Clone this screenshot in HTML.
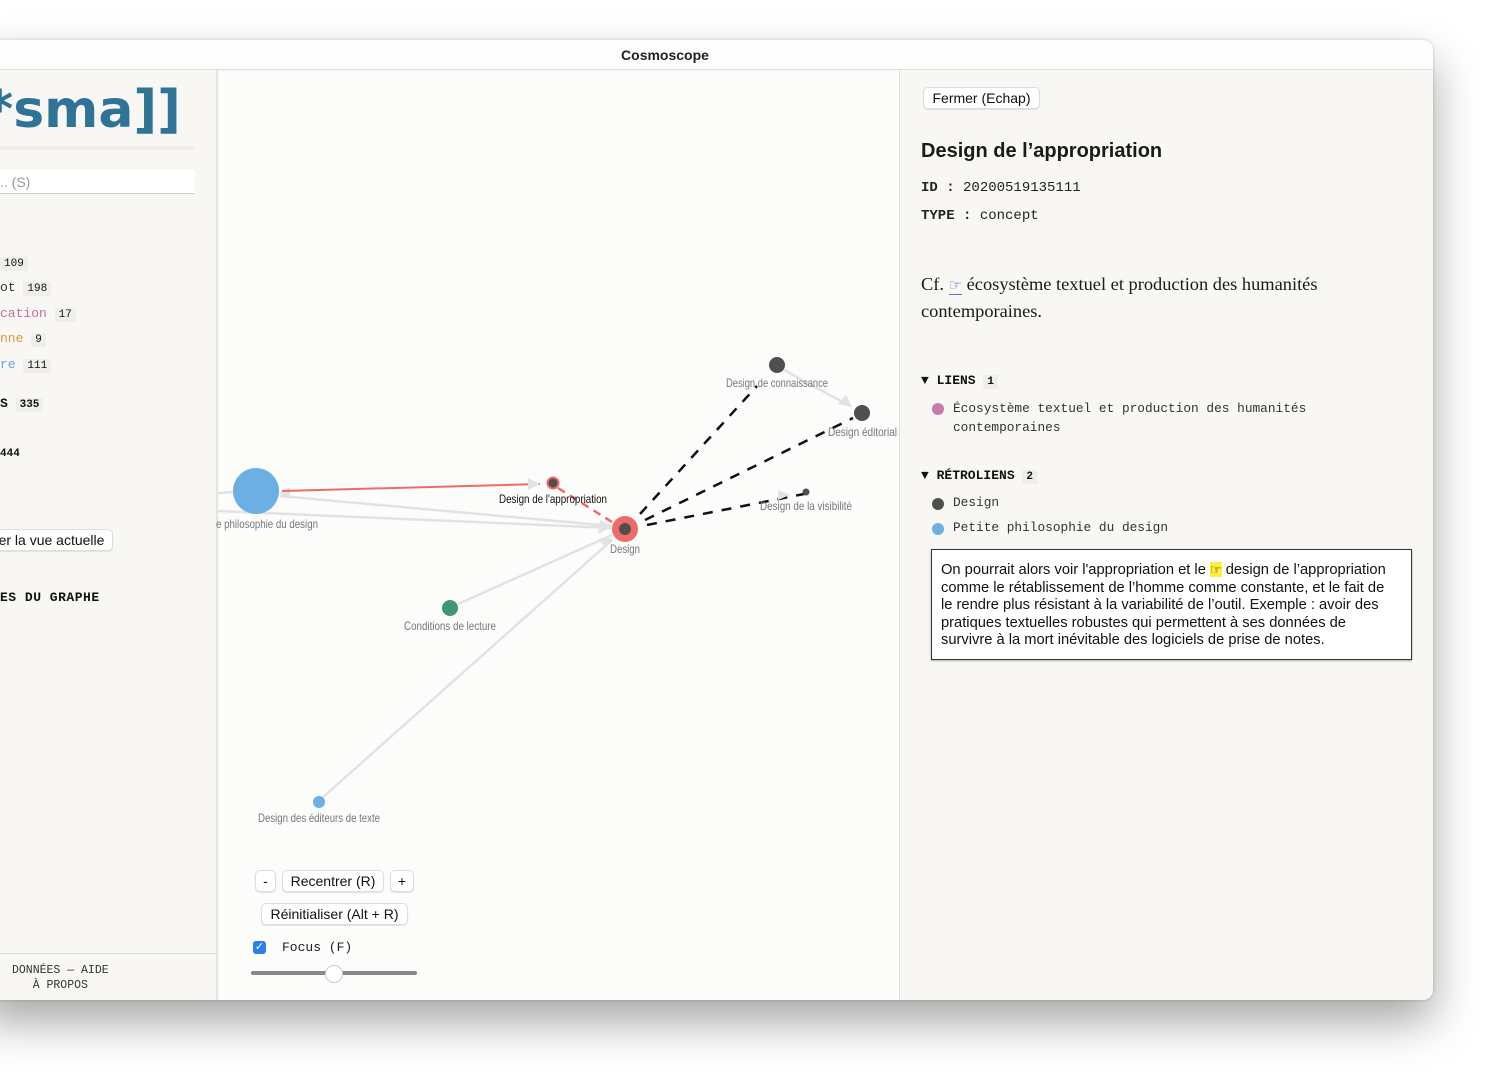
<!DOCTYPE html>
<html><head><meta charset="utf-8"><style>
*{margin:0;padding:0;box-sizing:border-box}
body{width:1493px;height:1080px;background:#fff;position:relative;overflow:hidden;font-family:"Liberation Sans",sans-serif}
.win{position:absolute;left:-20px;top:40px;width:1453px;height:960px;border-radius:0 10px 10px 0;background:#f8f7f4;box-shadow:0 22px 45px rgba(0,0,0,0.35),0 0 3px rgba(0,0,0,0.2);overflow:hidden}
.title{position:absolute;left:0;top:0;width:1370px;height:30px;text-align:center;font-weight:bold;font-size:14px;line-height:30px;color:#222}
.tbar{position:absolute;left:0;top:0;width:100%;height:30px;background:#fdfdfd;border-bottom:1px solid #ddd}
.a{position:absolute;white-space:nowrap}
.mono{font-family:"Liberation Mono",monospace}
.btn{position:absolute;background:#fff;border:1px solid #ddd;border-radius:5px;box-shadow:0 1px 1px rgba(0,0,0,.1);font-size:14px;color:#111;text-align:center;white-space:nowrap}
.cnt{background:#efeeec;padding:1px 4px;font-size:11px;color:#111}
.lbl{font-family:"Liberation Sans",sans-serif;font-size:12px;fill:#777}
</style></head><body>
<div class="win">
<div class="tbar"></div>
<div class="title">Cosmoscope</div>
</div>
<!-- sidebar -->
<div class="a" style="left:0;top:70px;width:218px;height:930px;background:#f8f7f4;border-right:2px solid #e6e5e2"></div>
<div class="a" style="left:-14px;top:82px;font-size:52px;font-weight:bold;color:#2f7396;letter-spacing:0px;font-family:'DejaVu Sans',sans-serif;line-height:56px">*sma]]</div>
<div class="a" style="left:0;top:146px;width:195px;height:4px;background:#efeeeb"></div>
<div class="a" style="left:0;top:170px;width:195px;height:24px;background:#fff;border-bottom:1px solid #ccc;color:#999;font-size:14px;line-height:24px">.. (S)</div>
<div class="a mono" style="left:0;top:251px;font-size:13px;color:#333;line-height:23.4px">
<div><span class="cnt">109</span></div>
<div>ot <span class="cnt">198</span></div>
<div style="color:#c56d9f">cation <span class="cnt" style="color:#111">17</span></div>
<div style="color:#d89a3a">nne <span class="cnt" style="color:#111">9</span></div>
<div style="color:#5aa8e6">re <span class="cnt" style="color:#111">111</span></div>
</div>
<div class="a mono" style="left:0;top:396px;font-size:13px;font-weight:bold;color:#111">S <span class="cnt">335</span></div>
<div class="a mono" style="left:0;top:448px;font-size:11px;font-weight:bold;color:#111">444</div>
<div class="btn" style="left:-10px;top:529px;width:123px;height:22px;line-height:20px">er la vue actuelle</div>
<div class="a mono" style="left:0;top:590px;font-size:13px;font-weight:bold;color:#111;letter-spacing:.5px">ES DU GRAPHE</div>
<div class="a" style="left:0;top:953px;width:218px;height:1px;background:#ddd"></div>
<div class="a mono" style="left:12px;top:963px;font-size:11.5px;color:#333;line-height:15px;text-align:center">DONNÉES — AIDE<br>À PROPOS</div>
<!-- graph -->
<div class="a" style="left:219px;top:71px;width:680px;height:929px;background:#fcfcfb"></div>
<div class="a" style="left:899px;top:71px;width:1px;height:929px;background:#ddd"></div>
<svg class="a" style="left:0;top:0" width="1493" height="1080">
<g stroke="#e2e2e2" stroke-width="2.5" fill="none">
<line x1="218" y1="493" x2="234" y2="492"/>
<line x1="218" y1="511" x2="612" y2="528"/>
<line x1="280" y1="496" x2="612" y2="526"/>
<line x1="458" y1="604" x2="612" y2="535"/>
<line x1="322" y1="798" x2="612" y2="540"/>
<line x1="784" y1="370" x2="850" y2="406"/>
</g>
<g fill="#e2e2e2"><polygon points="612,527 600,520 598,534"/><polygon points="612,538 598,539 606,548"/><polygon points="852,407 838,404 846,395"/><polygon points="279,493 290,487 290,499"/></g>
<line x1="282" y1="491" x2="540" y2="484" stroke="#ee6b67" stroke-width="2"/>
<polygon points="540,484 528,478 528,490" fill="#e2e2e2"/>
<line x1="558" y1="488" x2="612" y2="522" stroke="#ee6b67" stroke-width="2.5" stroke-dasharray="8,6"/>
<g stroke="#111" stroke-width="2.5" stroke-dasharray="10,9" fill="none">
<line x1="640" y1="514" x2="757" y2="386"/>
<line x1="645" y1="520" x2="853" y2="418"/>
<line x1="647" y1="525" x2="804" y2="494"/>
</g>
<polygon points="790,495 778,490 778,500" fill="#e2e2e2"/>
<circle cx="256" cy="491" r="23" fill="#6cb0e3"/>
<circle cx="553" cy="483" r="5.5" fill="#4f4f4f" stroke="#ee6b67" stroke-width="2"/>
<circle cx="625" cy="529" r="13" fill="#ee6b67"/><circle cx="625" cy="529" r="6" fill="#4f4f4f"/>
<circle cx="777" cy="365" r="8" fill="#4f4f4f"/>
<circle cx="862" cy="413" r="8" fill="#4f4f4f"/>
<circle cx="806" cy="492" r="3.5" fill="#4f4f4f"/>
<circle cx="450" cy="608" r="8" fill="#3f9670"/>
<circle cx="319" cy="802" r="6" fill="#6cb0e3"/>
<text class="lbl" x="726" y="387" textLength="102" lengthAdjust="spacingAndGlyphs">Design de connaissance</text>
<text class="lbl" x="828" y="436" textLength="69" lengthAdjust="spacingAndGlyphs">Design éditorial</text>
<text class="lbl" x="760" y="510" textLength="92" lengthAdjust="spacingAndGlyphs">Design de la visibilité</text>
<text class="lbl" x="499" y="503" textLength="108" lengthAdjust="spacingAndGlyphs" style="fill:#111">Design de l'appropriation</text>
<text class="lbl" x="610" y="553" textLength="30" lengthAdjust="spacingAndGlyphs">Design</text>
<text class="lbl" x="216" y="528" textLength="102" lengthAdjust="spacingAndGlyphs">e philosophie du design</text>
<text class="lbl" x="404" y="630" textLength="92" lengthAdjust="spacingAndGlyphs">Conditions de lecture</text>
<text class="lbl" x="258" y="822" textLength="122" lengthAdjust="spacingAndGlyphs">Design des éditeurs de texte</text>
</svg>
<div class="btn" style="left:255px;top:870px;width:21px;height:22px;line-height:20px">-</div>
<div class="btn" style="left:282px;top:870px;width:102px;height:22px;line-height:20px">Recentrer (R)</div>
<div class="btn" style="left:390px;top:870px;width:24px;height:22px;line-height:20px">+</div>
<div class="btn" style="left:261px;top:903px;width:147px;height:22px;line-height:20px">Réinitialiser (Alt + R)</div>
<div class="a" style="left:253px;top:941px;width:13px;height:13px;background:#2a7ff0;border-radius:3px;color:#fff;font-size:11px;line-height:13px;text-align:center">✓</div>
<div class="a mono" style="left:282px;top:940px;font-size:13px;color:#222">Focus (F)</div>
<div class="a" style="left:251px;top:971px;width:166px;height:4px;background:#888;border-radius:2px"></div>
<div class="a" style="left:325px;top:965px;width:18px;height:18px;background:#fff;border:1px solid #ccc;border-radius:50%"></div>
<!-- right panel -->
<div class="btn" style="left:923px;top:87px;width:117px;height:22px;line-height:20px">Fermer (Echap)</div>
<div class="a" style="left:921px;top:140px;font-size:20px;font-weight:bold;color:#1a1a1a">Design de l’appropriation</div>
<div class="a mono" style="left:921px;top:180px;font-size:14px;color:#222"><b>ID :</b> 20200519135111</div>
<div class="a mono" style="left:921px;top:208px;font-size:14px;color:#222"><b>TYPE :</b> concept</div>
<div class="a" style="left:921px;top:272px;font-family:'Liberation Serif',serif;font-size:18.4px;line-height:25px;color:#1a1a1a">Cf. <span style="color:#5577bb;font-size:15px;border-bottom:1px solid #5577bb">☞</span> écosystème textuel et production des humanités<br>contemporaines.</div>
<div class="a mono" style="left:921px;top:373px;font-size:13px;font-weight:bold;color:#111">▼ LIENS <span class="cnt">1</span></div>
<div class="a" style="left:932px;top:403px;width:12px;height:12px;border-radius:50%;background:#c97aa8"></div>
<div class="a mono" style="left:953px;top:399px;font-size:12.8px;color:#333;line-height:19px">Écosystème textuel et production des humanités<br>contemporaines</div>
<div class="a mono" style="left:921px;top:468px;font-size:13px;font-weight:bold;color:#111">▼ RÉTROLIENS <span class="cnt">2</span></div>
<div class="a" style="left:932px;top:498px;width:12px;height:12px;border-radius:50%;background:#4f4f4f"></div>
<div class="a mono" style="left:953px;top:495px;font-size:12.8px;color:#333">Design</div>
<div class="a" style="left:932px;top:523px;width:12px;height:12px;border-radius:50%;background:#6cb0e3"></div>
<div class="a mono" style="left:953px;top:520px;font-size:12.8px;color:#333">Petite philosophie du design</div>
<div class="a" style="left:931px;top:549px;width:481px;height:111px;background:#fff;border:1px solid #333;box-shadow:0 1px 2px rgba(0,0,0,.3);padding:11px 9px;font-size:14.7px;line-height:17.5px;color:#111;white-space:normal">On pourrait alors voir l'appropriation et le <span style="background:#ffef3a;font-size:13px">☞</span> design de l’appropriation<br>comme le rétablissement de l’homme comme constante, et le fait de<br>le rendre plus résistant à la variabilité de l’outil. Exemple : avoir des<br>pratiques textuelles robustes qui permettent à ses données de<br>survivre à la mort inévitable des logiciels de prise de notes.</div>
</body></html>
